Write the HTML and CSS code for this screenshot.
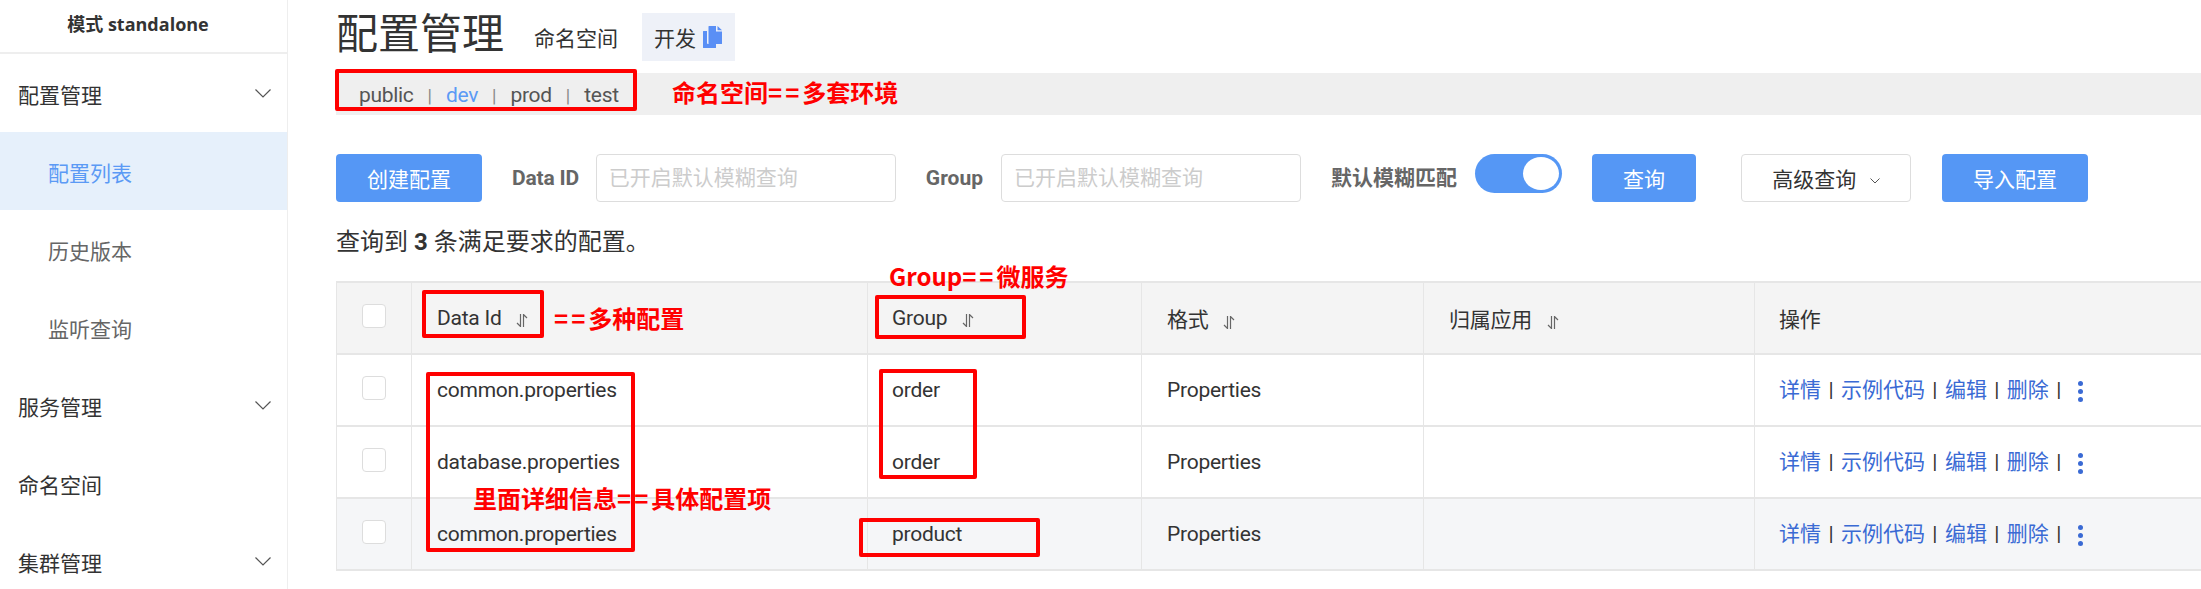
FILE: index.html
```html
<!DOCTYPE html>
<html lang="zh">
<head>
    <meta charset="UTF-8">
    <meta name="viewport" content="width=device-width, initial-scale=1.0">
    <title>配置管理</title>
    <link rel="stylesheet" href="styles.css">
</head>
<body>
    <div class="layout">
        <aside class="sidebar">
            <div class="mode">模式 standalone</div>
            <div class="menu-item">配置管理
                <svg class="chevron" viewBox="0 0 16 9"><path d="M0.5 0.5 L8 8 L15.5 0.5"/></svg>
            </div>
            <div class="menu-item sub active">配置列表</div>
            <div class="menu-item sub">历史版本</div>
            <div class="menu-item sub">监听查询</div>
            <div class="menu-item">服务管理
                <svg class="chevron" viewBox="0 0 16 9"><path d="M0.5 0.5 L8 8 L15.5 0.5"/></svg>
            </div>
            <div class="menu-item">命名空间</div>
            <div class="menu-item">集群管理
                <svg class="chevron" viewBox="0 0 16 9"><path d="M0.5 0.5 L8 8 L15.5 0.5"/></svg>
            </div>
        </aside>

        <main class="main">
            <div class="title-row">
                <h1>配置管理</h1>
                <span class="ns-label">命名空间</span>
                <span class="ns-chip">开发
                    <svg class="copy-icon" viewBox="0 0 19 22">
                        <path d="M0.5 5 H4 V17 A1 1 0 0 0 5 18 H13 V21.5 A0.5 0.5 0 0 1 12.5 22 H0.5 A0.5 0.5 0 0 1 0 21.5 V5.5 A0.5 0.5 0 0 1 0.5 5 Z"/>
                        <path d="M6 0 H13 V5.5 H19 V17.5 A0.5 0.5 0 0 1 18.5 18 H6 A0.5 0.5 0 0 1 5.5 17.5 V0.5 A0.5 0.5 0 0 1 6 0 Z"/>
                        <path d="M14.5 0 L19 4.2 H14.5 Z"/>
                    </svg>
                </span>
            </div>

            <div class="ns-bar">
                <span class="ns-link">public</span>
                <span class="ns-sep">|</span>
                <span class="ns-link current">dev</span>
                <span class="ns-sep">|</span>
                <span class="ns-link">prod</span>
                <span class="ns-sep">|</span>
                <span class="ns-link">test</span>
            </div>

            <div class="toolbar">
                <button class="btn btn-create">创建配置</button>
                <label class="field-label label-id">Data ID</label>
                <input class="search-input" type="text" placeholder="已开启默认模糊查询">
                <label class="field-label label-group">Group</label>
                <input class="search-input" type="text" placeholder="已开启默认模糊查询">
                <label class="field-label label-fuzzy">默认模糊匹配</label>
                <span class="switch"><span class="knob"></span></span>
                <button class="btn btn-query">查询</button>
                <button class="btn-outline">高级查询
                    <svg class="caret" viewBox="0 0 10 6"><path d="M0.5 0.5 L5 5 L9.5 0.5"/></svg>
                </button>
                <button class="btn btn-import">导入配置</button>
            </div>

            <p class="count">查询到 <b>3</b> 条满足要求的配置。</p>

            <table class="config-table">
                <colgroup>
                    <col class="col-check">
                    <col class="col-id">
                    <col class="col-group">
                    <col class="col-format">
                    <col class="col-app">
                    <col>
                </colgroup>
                <thead>
                    <tr>
                        <th><span class="check"></span></th>
                        <th>Data Id <svg class="sort" viewBox="0 0 12 13"><path d="M4.5 0 V12.5 L1 9 M7.5 13 V0.5 L11 4"/></svg></th>
                        <th>Group <svg class="sort" viewBox="0 0 12 13"><path d="M4.5 0 V12.5 L1 9 M7.5 13 V0.5 L11 4"/></svg></th>
                        <th>格式 <svg class="sort" viewBox="0 0 12 13"><path d="M4.5 0 V12.5 L1 9 M7.5 13 V0.5 L11 4"/></svg></th>
                        <th>归属应用 <svg class="sort" viewBox="0 0 12 13"><path d="M4.5 0 V12.5 L1 9 M7.5 13 V0.5 L11 4"/></svg></th>
                        <th>操作</th>
                    </tr>
                </thead>
                <tbody>
                    <tr>
                        <td><span class="check"></span></td>
                        <td>common.properties</td>
                        <td>order</td>
                        <td>Properties</td>
                        <td></td>
                        <td class="actions"><a>详情</a> | <a>示例代码</a> | <a>编辑</a> | <a>删除</a> | <span class="more"><i></i><i></i><i></i></span></td>
                    </tr>
                    <tr>
                        <td><span class="check"></span></td>
                        <td>database.properties</td>
                        <td>order</td>
                        <td>Properties</td>
                        <td></td>
                        <td class="actions"><a>详情</a> | <a>示例代码</a> | <a>编辑</a> | <a>删除</a> | <span class="more"><i></i><i></i><i></i></span></td>
                    </tr>
                    <tr class="row-alt">
                        <td><span class="check"></span></td>
                        <td>common.properties</td>
                        <td>product</td>
                        <td>Properties</td>
                        <td></td>
                        <td class="actions"><a>详情</a> | <a>示例代码</a> | <a>编辑</a> | <a>删除</a> | <span class="more"><i></i><i></i><i></i></span></td>
                    </tr>
                </tbody>
            </table>
        </main>
    </div>

    <!-- 红色标注 -->
    <div class="box box-ns"></div>
    <div class="box box-id-head"></div>
    <div class="box box-id-col"></div>
    <div class="box box-group-head"></div>
    <div class="box box-order"></div>
    <div class="box box-product"></div>
    <div class="note note-ns">命名空间<span class="eq">==</span>多套环境</div>
    <div class="note note-id"><span class="eq">==</span>多种配置</div>
    <div class="note note-group">Group<span class="eq">==</span>微服务</div>
    <div class="note note-detail">里面详细信息<span class="eq">==</span>具体配置项</div>
</body>
</html>
```

FILE: styles.css
```css
* {
    box-sizing: border-box;
}

html, body {
    height: 100%;
}

body {
    margin: 0;
    overflow: hidden;
    position: relative;
    font-family: Roboto, "Noto Sans CJK SC", sans-serif;
    font-size: 21px;
    color: #333;
    background-color: #fff;
}

.layout {
    display: flex;
    height: 100%;
}

/* 左侧菜单 */
.sidebar {
    flex: 0 0 288px;
    border-right: 1px solid #eee;
}

.mode {
    height: 54px;
    line-height: 48px;
    text-align: center;
    font-family: "Open Sans", "Noto Sans CJK SC", sans-serif;
    font-size: 18px;
    font-weight: bold;
    color: #333;
    border-bottom: 2px solid #eee;
    padding-right: 11px;
}

.menu-item {
    display: flex;
    align-items: center;
    justify-content: space-between;
    height: 78px;
    padding: 1px 16px 0 18px;
    color: #333;
}

.menu-item.sub {
    padding-left: 48px;
    color: #666;
}

.menu-item.active {
    background-color: #e6f0fb;
    color: #5b9af5;
}

.chevron {
    width: 16px;
    height: 9px;
    fill: none;
    stroke: #555;
    stroke-width: 1.2;
}

/* 主区域 */
.main {
    flex: 1;
    min-width: 0;
    padding: 13px 0 0 48px;
}

.title-row {
    display: flex;
    align-items: center;
    height: 48px;
}

h1 {
    margin: -5px 30px 0 0;
    font-size: 42px;
    font-weight: normal;
    line-height: 48px;
}

.ns-label {
    margin-right: 24px;
}

.ns-chip {
    display: flex;
    align-items: center;
    height: 48px;
    padding: 0 13px 0 12px;
    background-color: #eef1f8;
}

.copy-icon {
    width: 19px;
    height: 22px;
    margin-left: 7px;
    fill: #5a8ff5;
}

.ns-bar {
    display: flex;
    align-items: center;
    height: 42px;
    margin-top: 12px;
    padding: 2px 0 0 23px;
    background-color: #efefef;
    color: #555;
    font-size: 21px;
}

.ns-link {
    letter-spacing: -0.3px;
}

.ns-link.current {
    color: #5b9af5;
}

.ns-sep {
    margin: 0 14px;
    color: #888;
    font-size: 18px;
}

.toolbar {
    display: flex;
    align-items: flex-start;
    height: 48px;
    margin-top: 39px;
}

.btn, .btn-outline {
    height: 48px;
    border-radius: 4px;
    font-family: inherit;
    font-size: 21px;
    cursor: pointer;
}

.btn {
    border: none;
    background-color: #5597f5;
    color: #fff;
}

.btn-create {
    width: 146px;
}

.btn-query {
    width: 104px;
    margin-left: 30px;
}

.btn-import {
    width: 146px;
    margin-left: 31px;
}

.btn-outline {
    width: 170px;
    margin-left: 45px;
    border: 1px solid #ddd;
    background-color: #fff;
    color: #333;
}

.caret {
    width: 10px;
    height: 6px;
    margin-left: 8px;
    vertical-align: 3px;
    fill: none;
    stroke: #555;
    stroke-width: 1;
}

.field-label {
    line-height: 48px;
    font-weight: bold;
    color: #666;
}

.label-id {
    margin: 0 17px 0 30px;
    letter-spacing: -0.2px;
}

.label-group {
    margin: 0 18px 0 30px;
}

.label-fuzzy {
    margin: 0 18px 0 30px;
}

.search-input {
    width: 300px;
    height: 48px;
    padding: 0 12px;
    border: 1px solid #ddd;
    border-radius: 4px;
    font-family: inherit;
    font-size: 21px;
}

.search-input::placeholder {
    color: #ccc;
}

.switch {
    position: relative;
    width: 87px;
    height: 39px;
    border-radius: 20px;
    background-color: #5597f5;
}

.knob {
    position: absolute;
    top: 3px;
    right: 3px;
    width: 36px;
    height: 33px;
    border-radius: 50%;
    background-color: #fff;
}

.count {
    height: 30px;
    margin: 25px 0 24px;
    line-height: 30px;
    font-size: 24px;
}

/* 配置表格 */
.config-table {
    width: 100%;
    border-collapse: separate;
    border-spacing: 0;
    table-layout: fixed;
    border-top: 2px solid #e6e6e6;
    border-left: 1px solid #e6e6e6;
    letter-spacing: -0.25px;
}

.col-check {
    width: 74px;
}

.col-id {
    width: 456px;
}

.col-group {
    width: 274px;
}

.col-format {
    width: 282px;
}

.col-app {
    width: 331px;
}

.config-table th, .config-table td {
    padding: 0 0 0 25px;
    border-bottom: 2px solid #e6e6e6;
    border-left: 1px solid #e6e6e6;
    text-align: left;
    font-weight: normal;
    color: #333;
}

.config-table th:first-child, .config-table td:first-child {
    border-left: none;
}

.config-table th:nth-child(3), .config-table td:nth-child(3),
.config-table th:nth-child(6), .config-table td:nth-child(6) {
    padding-left: 24px;
}

.config-table thead tr {
    height: 72px;
    background-color: #f4f4f4;
}

.config-table tbody tr {
    height: 72px;
}

.config-table tbody tr.row-alt {
    background-color: #f5f6f8;
}

.check {
    display: block;
    width: 24px;
    height: 24px;
    margin-top: -4px;
    border: 1px solid #ddd;
    border-radius: 4px;
    background-color: #fff;
}

.sort {
    width: 12px;
    height: 13px;
    margin-left: 10px;
    vertical-align: -2px;
    fill: none;
    stroke: #666;
    stroke-width: 1.2;
}

.config-table .actions {
    padding-bottom: 4px;
    letter-spacing: 0;
    word-spacing: 2.2px;
}

.actions a {
    color: #3a6ad4;
}

.more {
    display: inline-flex;
    flex-direction: column;
    gap: 3px;
    margin: -6px 0 -6px 9px;
    vertical-align: middle;
}

.more i {
    display: block;
    width: 5px;
    height: 5px;
    border-radius: 50%;
    background-color: #3a6ad4;
}

/* 红色标注 */
.box {
    position: absolute;
    border: 4px solid #ff0000;
    border-radius: 2px;
}

.box-ns {
    left: 335px;
    top: 69px;
    width: 302px;
    height: 42px;
}

.box-id-head {
    left: 422px;
    top: 290px;
    width: 122px;
    height: 48px;
}

.box-id-col {
    left: 426px;
    top: 372px;
    width: 209px;
    height: 180px;
}

.box-group-head {
    left: 875px;
    top: 295px;
    width: 151px;
    height: 44px;
}

.box-order {
    left: 879px;
    top: 369px;
    width: 98px;
    height: 110px;
}

.box-product {
    left: 859px;
    top: 518px;
    width: 181px;
    height: 39px;
}

.note {
    position: absolute;
    font-family: "Noto Sans CJK SC", sans-serif;
    font-size: 24px;
    font-weight: bold;
    line-height: 30px;
    color: #ff0000;
    white-space: nowrap;
}

.eq {
    letter-spacing: 3px;
}

.note-ns {
    left: 672px;
    top: 77px;
}

.note-id {
    left: 554px;
    top: 303px;
}

.note-group {
    left: 889px;
    top: 261px;
}

.note-detail {
    left: 473px;
    top: 483px;
}
```
